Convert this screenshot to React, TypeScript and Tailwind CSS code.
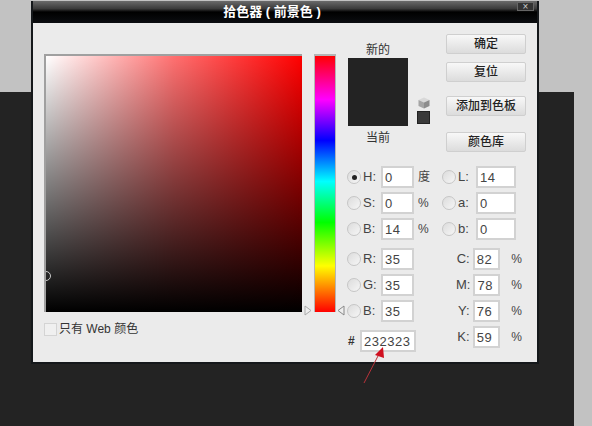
const font = "font-['Liberation_Sans','Noto_Sans_CJK_SC',sans-serif]";

function Radio({ checked }: { checked?: boolean }) {
  return (
    <span className="flex h-[14px] w-[14px] shrink-0 items-center justify-center rounded-full border border-[#c6c6c6] bg-gradient-to-br from-[#dcdcdc] to-[#f6f6f6]">
      {checked && <span className="h-[5px] w-[5px] rounded-full bg-[#222]" />}
    </span>
  );
}

function Field({ value, className }: { value: string; className: string }) {
  return (
    <span className={`flex h-[22px] items-center border-2 border-[#d2d2d2] bg-white pl-[2px] text-[13px] leading-none tracking-[0.5px] text-[#444] ${className}`}>
      {value}
    </span>
  );
}

function ColorRow({ label, value, unit, checked, width = 'w-[33px]' }: { label: string; value: string; unit?: string; checked?: boolean; width?: string }) {
  return (
    <div className="flex h-[26px] items-center">
      <Radio checked={checked} />
      <span className="ml-[2px] w-[18px] text-[13px] text-[#444]">{label}</span>
      <Field value={value} className={width} />
      {unit && <span className="ml-[4px] text-[12px] text-[#444]">{unit}</span>}
    </div>
  );
}

function CmykRow({ label, value }: { label: string; value: string }) {
  return (
    <div className="flex h-[26px] items-center">
      <span className="w-[20px] pr-[3px] text-right text-[13px] text-[#444]">{label}</span>
      <Field value={value} className="w-[33px]" />
      <span className="ml-[11px] text-[12px] text-[#444]">%</span>
    </div>
  );
}

function PickerButton({ label, className = '' }: { label: string; className?: string }) {
  return (
    <div className={`flex h-[20px] w-[80px] items-center justify-center rounded-[2px] border border-[#cfcfcf] bg-gradient-to-b from-[#f8f8f8] to-[#dcdcdc] text-[12px] font-medium text-[#222] ${className}`}>
      {label}
    </div>
  );
}

export default function App() {
  return (
    <div className={`relative flex h-[426px] w-[592px] flex-col overflow-hidden bg-[#c2c2c2] ${font}`}>
      <div className="h-[92px] shrink-0" />
      <div className="w-[574px] flex-1 bg-[#232323]" />

      {/* dialog window */}
      <div className="absolute left-[31px] top-[1px] flex h-[363px] w-[508px] flex-col border-x-2 border-b-2 border-[#15181b] bg-[#ebebeb]">
        <div className="relative flex h-[22px] shrink-0 items-center justify-center bg-[linear-gradient(to_bottom,#6a6a6a,#3a3a3a_35%,#000_50%,#0b0d10)] pr-[26px] text-[13px] font-bold text-white">
          拾色器 ( 前景色 )
          <span className="absolute right-[3px] top-[1px] flex h-[9px] w-[17px] items-center justify-center border border-[#666] bg-[#333] text-[10px] font-normal leading-none text-[#ccc]">×</span>
        </div>

        <div className="flex flex-1 pl-[11px] pt-[31px]">
          <div className="w-[258px]">
            <div className="relative h-[258px] w-[258px] overflow-hidden border-l-2 border-t-2 border-[#a0a0a0] bg-[linear-gradient(to_top,#000,transparent),linear-gradient(to_right,#fff,#ff7070_50%,#f00)]">
              <span className="absolute left-[-5px] top-[215px] h-[10px] w-[10px] rounded-full border border-[#ccc]" />
            </div>
            <div className="mt-[8px] flex items-center">
              <span className="h-[13px] w-[13px] border border-[#d4d4d4] bg-[#f0f0f0]" />
              <span className="ml-[2px] text-[12px] text-[#333]">只有 Web 颜色</span>
            </div>
          </div>

          <div className="relative ml-[12px] h-[258px] w-[22px] border-x border-t-2 border-[#b5b5b5] bg-[linear-gradient(to_bottom,#f00,#f0f_17%,#00f_33%,#0ff_49%,#0f0_65%,#ff0_82%,#f00)]">
            <svg className="absolute bottom-[-4px] left-[-11px]" width="9" height="11" viewBox="0 0 9 11" fill="#eee" stroke="#aaa"><path d="M1 1 L7 5.5 L1 10 Z" /></svg>
            <svg className="absolute bottom-[-4px] right-[-10px]" width="9" height="11" viewBox="0 0 9 11" fill="#eee" stroke="#888"><path d="M8 1 L2 5.5 L8 10 Z" /></svg>
          </div>

          <div className="ml-[11px] flex-1">
            <div className="flex">
              <div className="-mt-[12px] ml-[1px] flex w-[60px] flex-col items-center text-[12px] text-[#333]">
                <span className="h-[17px] leading-[17px]">新的</span>
                <div className="-mt-[1px] h-[68px] w-[60px] bg-[#232323]" />
                <span className="mt-[3px]">当前</span>
              </div>
              <div className="ml-[9px] mt-[43px] flex flex-col items-center">
                <svg width="12" height="12" viewBox="0 0 12 12">
                  <path d="M6 0.5 L11.5 3 L6 5.5 L0.5 3 Z" fill="#d8d8d8" />
                  <path d="M0.5 3 L6 5.5 V11.5 L0.5 9 Z" fill="#a4a4a4" />
                  <path d="M11.5 3 L6 5.5 V11.5 L11.5 9 Z" fill="#8c8c8c" />
                </svg>
                <span className="mt-[2px] h-[13px] w-[13px] border border-[#222] bg-[#3a3a3a]" />
              </div>
              <div className="ml-[16px] -mt-[20px] flex flex-col">
                <PickerButton label="确定" />
                <PickerButton label="复位" className="mt-[8px]" />
                <PickerButton label="添加到色板" className="mt-[14px]" />
                <PickerButton label="颜色库" className="mt-[16px]" />
              </div>
            </div>

            <div className="mt-[12px] flex">
              <div className="w-[95px]">
                <ColorRow label="H:" value="0" unit="度" checked />
                <ColorRow label="S:" value="0" unit="%" />
                <ColorRow label="B:" value="14" unit="%" />
                <div className="mt-[4px]">
                  <ColorRow label="R:" value="35" />
                  <ColorRow label="G:" value="35" />
                  <ColorRow label="B:" value="35" />
                </div>
                <div className="mt-[6px] flex h-[22px] items-center">
                  <span className="ml-[1px] w-[12px] text-[12px] font-bold text-[#333]">#</span>
                  <Field value="232323" className="w-[56px]" />
                </div>
              </div>
              <div className="w-[80px]">
                <ColorRow label="L:" value="14" width="w-[40px]" />
                <ColorRow label="a:" value="0" width="w-[40px]" />
                <ColorRow label="b:" value="0" width="w-[40px]" />
                <div className="ml-[14px] mt-[4px]">
                  <CmykRow label="C:" value="82" />
                  <CmykRow label="M:" value="78" />
                  <CmykRow label="Y:" value="76" />
                  <CmykRow label="K:" value="59" />
                </div>
              </div>
            </div>
          </div>
        </div>
      </div>

      {/* annotation arrow over the hex field */}
      <svg className="absolute left-[358px] top-[344px]" width="30" height="44" viewBox="0 0 30 44">
        <path d="M6 39 L20 12" stroke="#b8323a" strokeWidth="1" />
        <path d="M25 3 L26 14 L17 11 Z" fill="#d01020" />
      </svg>
    </div>
  );
}
